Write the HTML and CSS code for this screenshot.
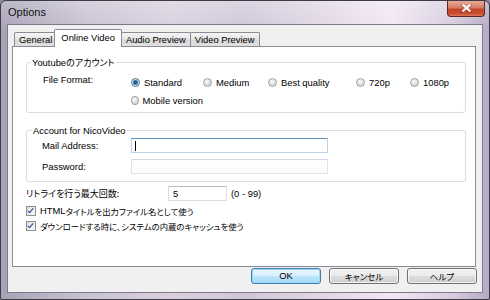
FILE: index.html
```html
<!DOCTYPE html>
<html lang="ja">
<head>
    <meta charset="UTF-8">
    <meta name="viewport" content="width=device-width, initial-scale=1.0">
    <title>Options</title>
    <link rel="stylesheet" href="styles.css">
</head>
<body>
    <div class="window">
        <div class="titlebar">
            <span class="title">Options</span>
            <button class="close-button">
                <svg width="11" height="9" viewBox="0 0 11 9">
                    <path d="M1.5 1 L9.5 8 M9.5 1 L1.5 8" stroke="#5a2018" stroke-width="3" stroke-linecap="round" opacity="0.35"/>
                    <path d="M1.5 0.5 L9.5 7.5 M9.5 0.5 L1.5 7.5" stroke="#fff" stroke-width="2.2"/>
                </svg>
            </button>
        </div>
        <div class="client">
            <div class="tabs">
                <div class="tab">General</div>
                <div class="tab active">Online Video</div>
                <div class="tab">Audio Preview</div>
                <div class="tab">Video Preview</div>
            </div>
            <div class="panel">
                <fieldset class="group youtube">
                    <legend>Youtube<span class="ja">のアカウント</span></legend>
                    <div class="format-row">
                        <span class="field-label">File Format:</span>
                        <div class="radios">
                            <label class="radio checked"><span class="dot"></span>Standard</label>
                            <label class="radio"><span class="dot"></span>Medium</label>
                            <label class="radio"><span class="dot"></span>Best quality</label>
                            <label class="radio"><span class="dot"></span>720p</label>
                            <label class="radio"><span class="dot"></span>1080p</label>
                            <label class="radio"><span class="dot"></span>Mobile version</label>
                        </div>
                    </div>
                </fieldset>
                <fieldset class="group nico">
                    <legend>Account for NicoVideo</legend>
                    <div class="input-row">
                        <span class="field-label">Mail Address:</span>
                        <div class="textbox focused"><span class="caret"></span></div>
                    </div>
                    <div class="input-row">
                        <span class="field-label">Password:</span>
                        <div class="textbox disabled"></div>
                    </div>
                </fieldset>
                <div class="retry-row">
                    <span class="retry-label ja">リトライを行う最大回数:</span>
                    <div class="textbox small">5</div>
                    <span class="range">(0 - 99)</span>
                </div>
                <label class="check"><span class="box"></span>HTML<span class="ja">タイトルを出力ファイル名として使う</span></label>
                <label class="check"><span class="box"></span><span class="ja">ダウンロードする時に、システムの内蔵のキャッシュを使う</span></label>
            </div>
            <div class="buttons">
                <button class="button default">OK</button>
                <button class="button"><span class="ja">キャンセル</span></button>
                <button class="button"><span class="ja">ヘルプ</span></button>
            </div>
        </div>
    </div>
</body>
</html>
```

FILE: styles.css
```css
body {
    margin: 0;
    padding: 0;
    width: 490px;
    height: 300px;
    overflow: hidden;
    font-family: 'Liberation Sans', 'Noto Sans CJK JP', sans-serif;
    font-size: 9.4px;
    color: #000;
    background: #8d8a98;
}
.ja {
    font-family: 'Noto Sans CJK JP', sans-serif;
    font-size: 9px;
    font-feature-settings: "palt";
}
.window {
    width: 490px;
    height: 300px;
    box-sizing: border-box;
    border: 1px solid #3e3a48;
    border-radius: 6px 6px 2px 2px;
    background:
        linear-gradient(to bottom, rgba(255, 255, 255, 0.25), rgba(255, 255, 255, 0) 30px),
        linear-gradient(to right, #a8a2b6 0%, #c9c3d3 18%, #d9cfdf 35%, #cfc7d8 50%, #e6dbe9 70%, #f1e7f3 80%, #d8cde0 92%, #b5abc3 100%);
    display: flex;
    flex-direction: column;
}
.titlebar {
    height: 23px;
    display: flex;
    justify-content: space-between;
    align-items: flex-start;
}
.title {
    font-family: 'Liberation Sans', sans-serif;
    font-size: 11px;
    margin: 5px 0 0 7px;
    color: #111;
}
.close-button {
    width: 38px;
    height: 16px;
    margin: 0 4px 0 0;
    padding: 0;
    border: 1px solid #5c2a22;
    border-top: none;
    border-radius: 0 0 4px 4px;
    background: linear-gradient(to bottom, #e8a896 0%, #d67c66 45%, #c4432a 55%, #cc4e32 85%, #de7a5c 100%);
    display: flex;
    align-items: center;
    justify-content: center;
}
.client {
    margin: 0 6px 0 6px;
    height: 269px;
    box-sizing: border-box;
    border: 1px solid #7e7a8a;
    background: #f0f0f0;
    padding: 4px 5px 0 4px;
    display: flex;
    flex-direction: column;
}
.tabs {
    display: flex;
    align-items: flex-end;
    height: 17px;
    margin-left: 2px;
    position: relative;
    z-index: 1;
}
.tab {
    height: 14px;
    box-sizing: border-box;
    border: 1px solid #898c95;
    border-bottom: none;
    margin-right: -1px;
    padding: 0 4px;
    line-height: 13px;
    background: linear-gradient(to bottom, #f6f6f6, #e4e4e4 50%, #d9d9d9 51%, #e0e0e0);
    border-radius: 2px 2px 0 0;
}
.tab.active {
    height: 18px;
    margin: 0 -1px -1px -2px;
    padding: 0 6px;
    background: #fff;
    line-height: 15px;
    position: relative;
}
.panel {
    width: 464px;
    height: 221px;
    box-sizing: border-box;
    border: 1px solid #898c95;
    background: #fff;
    padding: 10px 9px 0 13px;
}
.group {
    margin: 0;
    border: 1px solid #d5dfe5;
    border-radius: 3px;
    box-shadow: inset 1px 1px 0 #fff;
}
.group legend {
    padding: 0 1px;
    line-height: 11px;
}
.youtube {
    padding: 6px 0 3px 16px;
}
.youtube legend {
    margin-left: -12px;
}
.format-row {
    display: flex;
}
.field-label {
    width: 88px;
    line-height: 11px;
    flex-shrink: 0;
}
.radios {
    display: grid;
    grid-template-columns: 72px 65px 88px 54px 50px;
    grid-auto-rows: 18px;
    margin-top: -1px;
}
.radio {
    display: flex;
    align-items: center;
    white-space: nowrap;
}
.dot {
    width: 9px;
    height: 9px;
    box-sizing: border-box;
    border-radius: 50%;
    border: 1px solid #a3a3a3;
    background: radial-gradient(circle at 40% 35%, #fbfbfb, #d4d4d4 70%, #c6c6c6);
    margin-right: 4px;
}
.radio.checked .dot {
    border-color: #5d7384;
    background: radial-gradient(circle, #1c5180 0, #2a73a8 2px, #cfe3f2 3px, #e8f1f8 4px);
}
.nico {
    margin-top: 12px;
    padding: 2px 0 7px 15px;
}
.nico legend {
    margin-left: -10px;
}
.input-row {
    display: flex;
    align-items: center;
    height: 15px;
}
.input-row + .input-row {
    margin-top: 6px;
}
.input-row .field-label {
    width: 89px;
}
.textbox {
    width: 197px;
    height: 15px;
    box-sizing: border-box;
    border: 1px solid #d8dde4;
    border-top-color: #b8bcc4;
    background: #fff;
    display: flex;
    align-items: center;
    padding-left: 3px;
}
.textbox.focused {
    border-color: #b8d3ea;
    border-top-color: #5c93bf;
}
.textbox.disabled {
    border-color: #e0e4ea;
    border-top-color: #d4d8de;
    background: #fdfdfd;
}
.caret {
    width: 1px;
    height: 10px;
    background: #000;
}
.retry-row {
    display: flex;
    align-items: center;
    height: 15px;
    margin-top: 4px;
}
.retry-label {
    width: 142px;
}
.textbox.small {
    width: 59px;
    padding-left: 4px;
}
.range {
    margin-left: 4px;
}
.check {
    display: flex;
    align-items: center;
    height: 15px;
    white-space: nowrap;
}
.check .ja {
    font-size: 8.4px;
}
.retry-row + .check {
    margin-top: 2px;
}
.box {
    width: 10px;
    height: 10px;
    box-sizing: border-box;
    border: 1px solid #8f8f8f;
    background: linear-gradient(135deg, #dcdcdc, #fafafa);
    margin-right: 4px;
    position: relative;
}
.box::after {
    content: "";
    position: absolute;
    left: 2px;
    top: 0px;
    width: 2px;
    height: 5px;
    border: solid #2b4a8a;
    border-width: 0 1.6px 1.6px 0;
    transform: rotate(40deg);
}
.buttons {
    display: flex;
    justify-content: flex-end;
    gap: 8px;
    margin-top: 1px;
}
.button {
    width: 70px;
    height: 16px;
    padding: 0;
    border: 1px solid #707070;
    border-radius: 3px;
    background: linear-gradient(to bottom, #f2f2f2, #ebebeb 48%, #dddddd 52%, #cfcfcf);
    box-shadow: inset 0 0 0 1px rgba(255, 255, 255, 0.7);
    font-family: 'Liberation Sans', 'Noto Sans CJK JP', sans-serif;
    font-size: 9.4px;
    color: #000;
    line-height: 14px;
}
.button .ja {
    font-size: 8.5px;
}
.button.default {
    border-color: #3c7fb1;
    background: linear-gradient(to bottom, #eaf6fd, #d9f0fc 48%, #bee6fd 52%, #a7d9f5);
    box-shadow: inset 0 0 0 1px #9ad8f8;
}
```
